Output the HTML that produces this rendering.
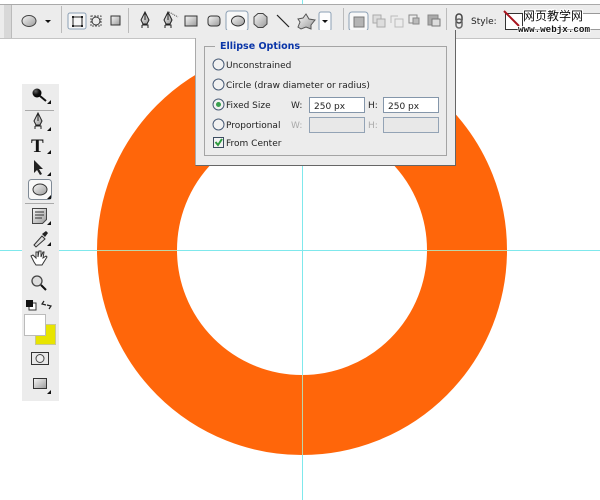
<!DOCTYPE html>
<html><head><meta charset="utf-8"><style>
html,body{margin:0;padding:0;background:#fff;width:600px;height:500px;overflow:hidden}
svg{position:absolute;left:0;top:0}
text{font-family:"DejaVu Sans","Liberation Sans",sans-serif;font-size:9px;fill:#222}
.ic{filter:blur(.3px)}
</style></head><body>
<svg width="600" height="500" viewBox="0 0 600 500">
<defs>
<linearGradient id="g" x1="0" y1="0" x2="1" y2="1"><stop offset="0" stop-color="#f8f8f8"/><stop offset="1" stop-color="#9a9a9a"/></linearGradient>
<radialGradient id="b" cx=".35" cy=".3" r=".8"><stop offset="0" stop-color="#666"/><stop offset=".5" stop-color="#111"/><stop offset="1" stop-color="#000"/></radialGradient>
</defs>
<!-- ring -->
<circle cx="302" cy="250" r="165" fill="none" stroke="#ff660a" stroke-width="80"/>
<!-- guides -->
<path d="M302.500 0V500M0 250.500H600" stroke="#7fe8ec" stroke-width="1" fill="none"/>
<path d="M302.500 47V127M302.500 375V455M97 250.500H177M427 250.500H507" stroke="#bcd6a8" stroke-width="1" fill="none"/>
<!-- top toolbar -->
<rect x="0" y="4" width="600" height="34" fill="#ececec"/>
<rect x="0" y="4" width="600" height="1" fill="#aaa"/>
<rect x="0" y="38" width="600" height="1" fill="#c4c4c4"/>
<rect x="4" y="5" width="7" height="33" fill="#d8d8d8"/>
<rect x="11" y="5" width="1" height="33" fill="#bbb"/>
<path d="M61.500 6V33M128.500 8V33M343.500 8V33M446.500 8V33" stroke="#bbb"/>
<g class="ic">
<ellipse cx="29" cy="21" rx="7" ry="5.500" fill="url(#g)" stroke="#444"/>
<path d="M45 20h6l-3 3z" fill="#111"/>
<rect x="68" y="13" width="18" height="16" rx="2" fill="#f6f6f6" stroke="#8ba0b5"/>
<rect x="73" y="17" width="9" height="9" fill="none" stroke="#222"/>
<path d="M72 16h2v2h-2zM81 16h2v2h-2zM72 25h2v2h-2zM81 25h2v2h-2z" fill="#222"/>
<rect x="91" y="16" width="10" height="10" fill="none" stroke="#555" stroke-dasharray="2 1"/>
<circle cx="96" cy="21" r="4" fill="none" stroke="#333"/>
<rect x="111" y="16" width="9" height="9" fill="url(#g)" stroke="#333"/>
<g fill="url(#g)" stroke="#222">
<path d="M145 12l4 8-2 4h-4l-2-4z"/><path d="M145 12v8"/><path d="M142 25h6v3M142 25v3" fill="none"/>
<path d="M168 12l4 8-2 4h-4l-2-4z"/><path d="M168 12v8"/><path d="M165 25h6v3M165 25v3" fill="none"/>
</g>
<path d="M169 12l9 5" stroke="#444" stroke-dasharray="1 1" fill="none"/>
<rect x="185" y="16" width="12" height="10" fill="url(#g)" stroke="#333"/>
<rect x="208" y="16" width="12" height="10" rx="3" fill="url(#g)" stroke="#333"/>
<rect x="226" y="11" width="22" height="20" rx="3" fill="#f8f8f8" stroke="#8ba0b5"/>
<ellipse cx="238" cy="21" rx="6.500" ry="5" fill="url(#g)" stroke="#333"/>
<path d="M254 17l4-3.500h5l4 3.500v7l-4 3.500h-5l-4-3.500z" fill="url(#g)" stroke="#444"/>
<path d="M277 15l12 12" stroke="#222" stroke-width="1.200"/>
<path d="M306 14l3 5 6 1-4 5v4l-5-2-5 2-3-2 2-5-2-3 5-1z" fill="url(#g)" stroke="#555"/>
<rect x="319" y="12" width="12" height="19" rx="2" fill="#fdfdfd" stroke="#8ba0b5"/>
<path d="M322 20h6l-3 3z" fill="#111"/>
<rect x="349" y="12" width="19" height="19" rx="3" fill="#f8f8f8" stroke="#8ba0b5"/>
<rect x="354" y="17" width="10" height="10" fill="#b4b4b4" stroke="#777"/>
<rect x="373" y="15" width="8" height="8" fill="#ddd" stroke="#aaa"/><rect x="377" y="19" width="8" height="8" fill="#ddd" stroke="#aaa"/>
<path d="M391 23v-7h7M395 27v-8h8v8z" fill="none" stroke="#bbb"/>
<rect x="409" y="15" width="8" height="8" fill="none" stroke="#888"/><rect x="413" y="18" width="6" height="6" fill="#bbb" stroke="#888"/>
<rect x="428" y="15" width="10" height="10" fill="#aaa" stroke="#888"/><rect x="432" y="19" width="8" height="7" fill="#ddd" stroke="#777"/>
<rect x="456" y="14" width="6" height="9" rx="3" fill="none" stroke="#444" stroke-width="1.500"/>
<rect x="456" y="19" width="6" height="9" rx="3" fill="none" stroke="#666" stroke-width="1.500"/>
</g>
<text x="471" y="24">Style:</text>
<rect x="522" y="13" width="78" height="17" fill="#fff"/>
<path d="M522 13.500h78M522 29.500h78" stroke="#999"/>
<rect x="505.500" y="13.500" width="17" height="16" fill="#fff" stroke="#333"/>
<path d="M504 11l15 15" stroke="#a8141e" stroke-width="2"/>
<text x="523" y="20" style="font-family:'Noto Sans CJK SC',sans-serif;font-size:12px;fill:#111;paint-order:stroke;stroke:#fff;stroke-width:2px">网页教学网</text>
<text x="518" y="32" textLength="72" lengthAdjust="spacingAndGlyphs" style="font-family:'Liberation Mono',monospace;font-size:9.500px;font-weight:bold;fill:#111;paint-order:stroke;stroke:#fff;stroke-width:1.500px">www.webjx.com</text>
<!-- dialog -->
<rect x="195" y="30" width="260" height="135" fill="#ececec"/>
<path d="M455.500 30V165.500H195.500" fill="none" stroke="#666"/>
<path d="M195.500 165V38" stroke="#aaa"/>
<path d="M215 46.500H204.500V155.500H446.500V46.500H299" fill="none" stroke="#a4a4a4"/>
<text x="220" y="49" style="font-weight:bold;fill:#0b36a8;font-size:9.500px;font-family:'DejaVu Sans',sans-serif">Ellipse Options</text>
<g fill="#f2f2f2" stroke="#4a5d78">
<circle cx="218.500" cy="64.500" r="5.500"/><circle cx="218.500" cy="84.500" r="5.500"/><circle cx="218.500" cy="104.500" r="5.500"/><circle cx="218.500" cy="124.500" r="5.500"/>
</g>
<circle cx="218.500" cy="104.500" r="2.500" fill="#3aa050"/>
<text x="226" y="68">Unconstrained</text>
<text x="226" y="88">Circle (draw diameter or radius)</text>
<text x="226" y="108">Fixed Size</text>
<text x="226" y="128">Proportional</text>
<text x="226" y="146">From Center</text>
<rect x="213.500" y="137.500" width="10" height="10" fill="#f2f2f2" stroke="#3c4c60"/>
<path d="M215.500 142l2.500 3 4-6" fill="none" stroke="#2f9a3f" stroke-width="2"/>
<text x="291" y="108">W:</text><text x="368" y="108">H:</text>
<text x="291" y="128" style="fill:#aaa">W:</text><text x="368" y="128" style="fill:#aaa">H:</text>
<rect x="309.500" y="97.500" width="55" height="15" fill="#fff" stroke="#8496aa"/>
<rect x="383.500" y="97.500" width="55" height="15" fill="#fff" stroke="#8496aa"/>
<rect x="309.500" y="117.500" width="55" height="15" fill="#e8e8e8" stroke="#93a3b5"/>
<rect x="383.500" y="117.500" width="55" height="15" fill="#e8e8e8" stroke="#93a3b5"/>
<text x="314" y="109">250 px</text><text x="388" y="109">250 px</text>
<!-- left toolbar -->
<rect x="22" y="84" width="37" height="317" fill="#ececec"/>
<path d="M25 110.500H54M25 203.500H54" stroke="#aaa"/>
<g class="ic">
<circle cx="37" cy="93" r="4.500" fill="url(#b)"/><path d="M40 96l6 5" stroke="#111" stroke-width="2"/>
<path d="M38 113l4 8-2 4h-4l-2-4z" fill="url(#g)" stroke="#222"/><path d="M38 113v8M35 126h6v3M35 126v3" fill="none" stroke="#222"/>
<text x="31" y="152" style="font-family:'Liberation Serif',serif;font-size:19px;font-weight:bold;fill:#111">T</text>
<path d="M34 160l0 13 3-3 3 5 2-1-3-5h4z" fill="#222"/>
<rect x="28.500" y="179.500" width="23" height="20" rx="3" fill="#f8f8f8" stroke="#7f8a96"/>
<ellipse cx="40" cy="189.500" rx="7" ry="5.500" fill="url(#g)" stroke="#333"/>
<path d="M32.500 208.500h14v11l-4 4h-10z" fill="url(#g)" stroke="#444"/>
<path d="M35 212h9M35 215h9M35 218h7" stroke="#333"/>
<path d="M34 245l8-9 3 3-9 8z" fill="#ddd" stroke="#333"/><path d="M42 234l4-3 2 2-3 4z" fill="#222"/>
<path d="M34 262l-3-6 2-1 3 3v-6h2v5l1-6h2v6l2-5h1l-1 6 3-2 1 1-5 8h-6z" fill="#fff" stroke="#333"/>
<circle cx="37" cy="281" r="5" fill="#ddd" stroke="#444" stroke-width="1.300"/><path d="M41 285l5 5" stroke="#111" stroke-width="2"/>
<rect x="29" y="303" width="7" height="7" fill="#fff" stroke="#333"/><rect x="26" y="300" width="7" height="7" fill="#111"/>
<path d="M44 301l-2 3 4 1M49 309l2-3-4-1" fill="none" stroke="#222" stroke-width="1.200"/>
<path d="M47 104l4-4v4zM47 131l4-4v4zM47 154l4-4v4zM47 176l4-4v4zM47 199l4-4v4zM47 225l4-4v4zM47 246l4-4v4zM47 394l4-4v4z" fill="#111"/>
</g>
<rect x="35.500" y="324.500" width="20" height="20" fill="#e8e400" stroke="#c8c890"/>
<rect x="24.500" y="314.500" width="21" height="21" fill="#fff" stroke="#bbb"/>
<rect x="31.500" y="352.500" width="17" height="12" fill="#e8e8e8" stroke="#333"/>
<circle cx="40" cy="358.500" r="4" fill="#eee" stroke="#444"/>
<rect x="33.500" y="378.500" width="13" height="10" fill="url(#g)" stroke="#333"/>
</svg>
</body></html>
